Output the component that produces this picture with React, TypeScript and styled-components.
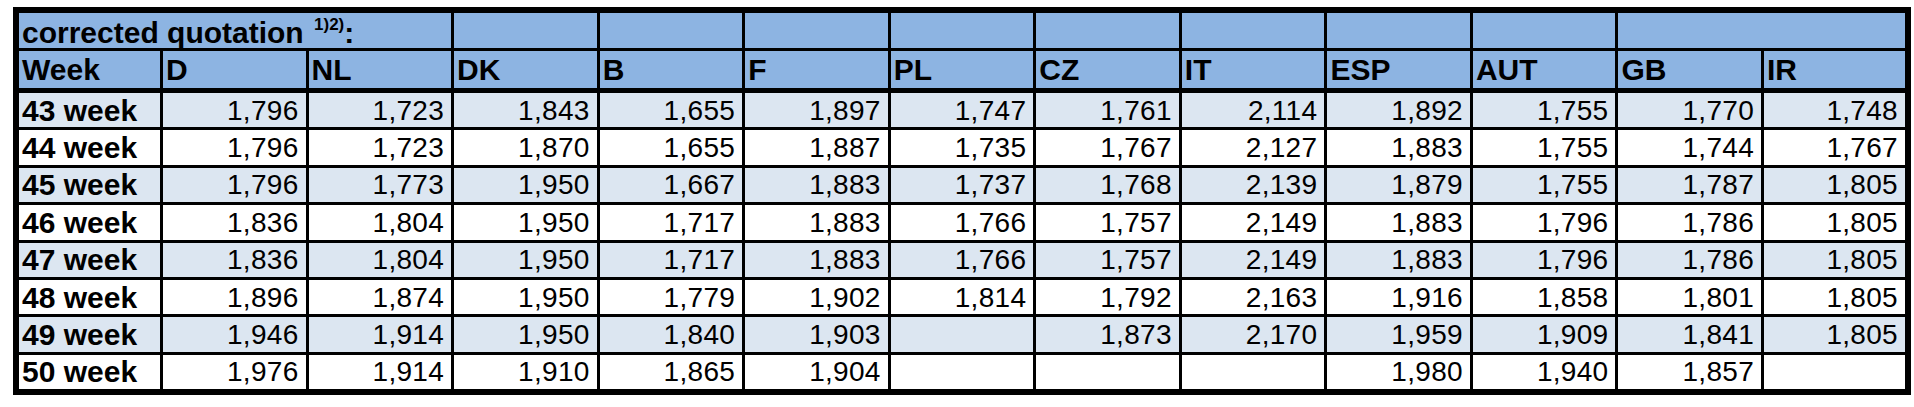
import React from 'react'
import styled, { createGlobalStyle } from 'styled-components'

const GlobalStyle = createGlobalStyle`
  html, body {
    margin: 0;
    padding: 0;
    background: #ffffff;
  }
  body {
    font-family: 'Liberation Sans', Arial, sans-serif;
    color: #000000;
  }
`

const HEADER_BLUE = '#8db4e2'
const STRIPE_BLUE = '#dce6f1'
const COLUMNS = '144px repeat(11, 145.55px) 1fr'

const StyledPage = styled.div`
  padding: 7px 0 0 13px;
`

const StyledTable = styled.div`
  width: 1898px;
  box-sizing: border-box;
  border: 6px solid #000;
  display: flex;
  flex-direction: column;
`

const StyledRow = styled.div<{ height: number; line: number; stripe?: boolean; header?: boolean }>`
  display: grid;
  grid-template-columns: ${COLUMNS};
  box-sizing: border-box;
  height: ${props => props.height}px;
  border-bottom: ${props => props.line}px solid #000;
  background: ${props => (props.header ? HEADER_BLUE : props.stripe ? STRIPE_BLUE : '#ffffff')};
  &:last-child {
    border-bottom: none;
  }
`

const StyledCell = styled.div<{ span?: number; bold?: boolean; alignRight?: boolean }>`
  display: flex;
  align-items: center;
  justify-content: ${props => (props.alignRight ? 'flex-end' : 'flex-start')};
  box-sizing: border-box;
  min-width: 0;
  overflow: hidden;
  white-space: nowrap;
  border-right: 3px solid #000;
  padding: ${props => (props.alignRight ? '1px 7px 0 0' : '1px 0 0 3px')};
  font-size: ${props => (props.bold ? '30px' : '28px')};
  font-weight: ${props => (props.bold ? 700 : 400)};
  letter-spacing: ${props => (props.bold ? '0' : '0.3px')};
  ${props => props.span && `grid-column: span ${props.span};`}
  &:last-child {
    border-right: none;
  }
`

const StyledTitle = styled.span`
  padding-top: 3px;
  sup {
    font-size: 17px;
    vertical-align: 0;
    position: relative;
    top: -13px;
    margin-left: 2px;
  }
`

const COUNTRIES = ['D', 'NL', 'DK', 'B', 'F', 'PL', 'CZ', 'IT', 'ESP', 'AUT', 'GB', 'IR']

const QUOTES: { week: string; values: string[] }[] = [
  { week: '43 week', values: ['1,796', '1,723', '1,843', '1,655', '1,897', '1,747', '1,761', '2,114', '1,892', '1,755', '1,770', '1,748'] },
  { week: '44 week', values: ['1,796', '1,723', '1,870', '1,655', '1,887', '1,735', '1,767', '2,127', '1,883', '1,755', '1,744', '1,767'] },
  { week: '45 week', values: ['1,796', '1,773', '1,950', '1,667', '1,883', '1,737', '1,768', '2,139', '1,879', '1,755', '1,787', '1,805'] },
  { week: '46 week', values: ['1,836', '1,804', '1,950', '1,717', '1,883', '1,766', '1,757', '2,149', '1,883', '1,796', '1,786', '1,805'] },
  { week: '47 week', values: ['1,836', '1,804', '1,950', '1,717', '1,883', '1,766', '1,757', '2,149', '1,883', '1,796', '1,786', '1,805'] },
  { week: '48 week', values: ['1,896', '1,874', '1,950', '1,779', '1,902', '1,814', '1,792', '2,163', '1,916', '1,858', '1,801', '1,805'] },
  { week: '49 week', values: ['1,946', '1,914', '1,950', '1,840', '1,903', '', '1,873', '2,170', '1,959', '1,909', '1,841', '1,805'] },
  { week: '50 week', values: ['1,976', '1,914', '1,910', '1,865', '1,904', '', '', '', '1,980', '1,940', '1,857', ''] },
]

const App: React.FC = () => {
  return (
    <StyledPage>
      <GlobalStyle />
      <StyledTable>
        <StyledRow height={38} line={3} header>
          <StyledCell span={3} bold>
            <StyledTitle>
              corrected quotation <sup>1)2)</sup>:
            </StyledTitle>
          </StyledCell>
          {COUNTRIES.slice(3).map(country => (
            <StyledCell key={country} />
          ))}
        </StyledRow>

        <StyledRow height={42} line={5} header>
          <StyledCell bold>Week</StyledCell>
          {COUNTRIES.map(country => (
            <StyledCell key={country} bold>
              {country}
            </StyledCell>
          ))}
        </StyledRow>

        {QUOTES.map((quote, index) => (
          <StyledRow key={quote.week} height={index === QUOTES.length - 1 ? 34.4 : 37.4} line={3} stripe={index % 2 === 0}>
            <StyledCell bold>{quote.week}</StyledCell>
            {quote.values.map((value, i) => (
              <StyledCell key={COUNTRIES[i]} alignRight>
                {value}
              </StyledCell>
            ))}
          </StyledRow>
        ))}
      </StyledTable>
    </StyledPage>
  )
}

export default App
